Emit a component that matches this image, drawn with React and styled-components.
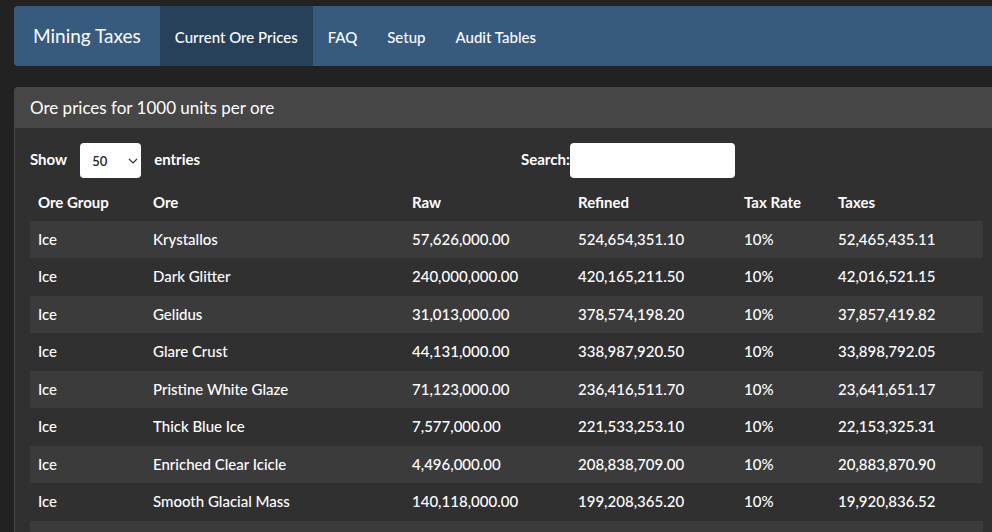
import React from "react";
import styled, { createGlobalStyle } from "styled-components";

const GlobalStyle = createGlobalStyle`
  * { box-sizing: border-box; }
  html, body { margin: 0; background: #222222; }
  body, button, input, select {
    font-family: Lato, "Liberation Sans", sans-serif;
    font-size: 15px;
    font-weight: 500;
    color: #ffffff;
  }
`;

const Page = styled.div`
  height: 100vh;
  overflow: auto;
  scrollbar-width: none;
  padding: 6px 0 0 14px;
`;

const Navbar = styled.nav`
  display: flex;
  align-items: stretch;
  height: 60px;
  background: #375a7f;
  border-radius: 4px 0 0 4px;
`;

const NavLink = styled.a`
  display: flex;
  align-items: center;
  padding: 2px 15px 0;
  color: #ffffff;
  text-decoration: none;
  background: ${(p) => (p.$active ? "#28415b" : "transparent")};
`;

const Brand = styled(NavLink)`
  padding: 0 19px 2px;
  font-size: 19px;
  font-weight: 400;
`;

const Panel = styled.section`
  margin-top: 21px;
  background: #303030;
  border: 1px solid #464646;
  border-right: 0;
  border-radius: 4px 0 0 0;
`;

const PanelHeading = styled.h1`
  margin: 0;
  padding: 0 15px;
  font-size: 17px;
  font-weight: 400;
  line-height: 40px;
  background: #464646;
`;

const PanelBody = styled.div`
  padding: 15px 9px 15px 15px;
`;

const Controls = styled.div`
  display: grid;
  grid-template-columns: 491fr 462fr;
  align-items: center;
  font-weight: 700;
`;

const Field = styled.label`
  display: flex;
  align-items: center;
`;

const FieldText = styled.span`
  padding-bottom: 4px;
`;

const SelectWrap = styled.span`
  position: relative;
  margin: 0 13px;
`;

const LengthSelect = styled.select`
  display: block;
  width: 61px;
  height: 35px;
  padding: 1px 12px 0;
  font-size: 13px;
  font-weight: 600;
  color: #222222;
  background: #ffffff;
  border: 0;
  border-radius: 4px;
  appearance: none;
`;

const Chevron = styled.svg`
  position: absolute;
  right: 3px;
  top: 13px;
  pointer-events: none;
`;

const SearchInput = styled.input`
  width: 165px;
  height: 35px;
  padding: 0 12px;
  color: #222222;
  background: #ffffff;
  border: 0;
  border-radius: 4px;
`;

const Table = styled.table`
  width: 100%;
  margin-top: 6px;
  table-layout: fixed;
  border-collapse: collapse;
`;

const Column = styled.col`
  width: calc(100% * ${(p) => p.$share} / 953);
`;

const HeadCell = styled.th`
  height: 37px;
  padding: 0 8px 2px;
  line-height: 20px;
  text-align: left;
  font-weight: 700;
`;

const Row = styled.tr`
  height: 38px;
  &:nth-child(odd) {
    height: 37px;
    background: #3b3b3b;
  }
`;

const Cell = styled.td`
  padding: 0 8px 2px;
  line-height: 20px;
`;

const navItems = ["Current Ore Prices", "FAQ", "Setup", "Audit Tables"];

const columns = [
  ["Ore Group", 115],
  ["Ore", 259],
  ["Raw", 166],
  ["Refined", 166],
  ["Tax Rate", 94],
  ["Taxes", 153],
];

const rows = [
  ["Ice", "Krystallos", "57,626,000.00", "524,654,351.10", "10%", "52,465,435.11"],
  ["Ice", "Dark Glitter", "240,000,000.00", "420,165,211.50", "10%", "42,016,521.15"],
  ["Ice", "Gelidus", "31,013,000.00", "378,574,198.20", "10%", "37,857,419.82"],
  ["Ice", "Glare Crust", "44,131,000.00", "338,987,920.50", "10%", "33,898,792.05"],
  ["Ice", "Pristine White Glaze", "71,123,000.00", "236,416,511.70", "10%", "23,641,651.17"],
  ["Ice", "Thick Blue Ice", "7,577,000.00", "221,533,253.10", "10%", "22,153,325.31"],
  ["Ice", "Enriched Clear Icicle", "4,496,000.00", "208,838,709.00", "10%", "20,883,870.90"],
  ["Ice", "Smooth Glacial Mass", "140,118,000.00", "199,208,365.20", "10%", "19,920,836.52"],
  ["", "", "", "", "", ""],
];

export default function App() {
  return (
    <>
      <GlobalStyle />
      <Page>
        <Navbar>
          <Brand href="#home">Mining Taxes</Brand>
          {navItems.map((item, i) => (
            <NavLink key={item} href={`#tab-${i}`} $active={i === 0}>{item}</NavLink>
          ))}
        </Navbar>
        <Panel>
          <PanelHeading>Ore prices for 1000 units per ore</PanelHeading>
          <PanelBody>
            <Controls>
              <Field>
                <FieldText>Show</FieldText>
                <SelectWrap>
                  <LengthSelect defaultValue="50">
                    <option>10</option>
                    <option>25</option>
                    <option>50</option>
                    <option>100</option>
                  </LengthSelect>
                  <Chevron width="10" height="10" viewBox="0 0 10 10" fill="none" stroke="#333333" strokeWidth="1.2">
                    <path d="M1 3l4 4 4-4" />
                  </Chevron>
                </SelectWrap>
                <FieldText>entries</FieldText>
              </Field>
              <Field>
                <FieldText>Search:</FieldText>
                <SearchInput type="search" />
              </Field>
            </Controls>
            <Table>
              <colgroup>
                {columns.map(([name, share]) => <Column key={name} $share={share} />)}
              </colgroup>
              <thead>
                <tr>{columns.map(([name]) => <HeadCell key={name} scope="col">{name}</HeadCell>)}</tr>
              </thead>
              <tbody>
                {rows.map((row, r) => (
                  <Row key={r}>
                    {row.map((value, i) => <Cell key={i}>{value}</Cell>)}
                  </Row>
                ))}
              </tbody>
            </Table>
          </PanelBody>
        </Panel>
      </Page>
    </>
  );
}
